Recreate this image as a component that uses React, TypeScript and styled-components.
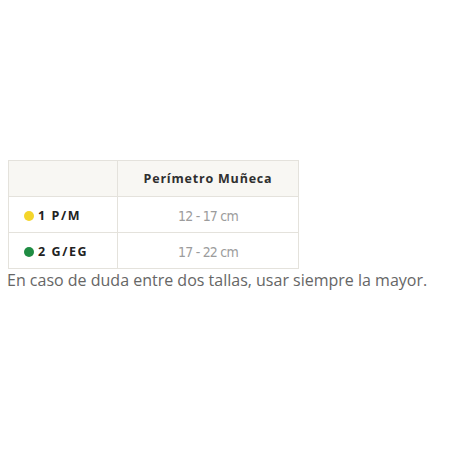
import React from 'react'
import styled, { createGlobalStyle } from 'styled-components'

const GlobalStyle = createGlobalStyle`
  body {
    margin: 0;
    background: #ffffff;
    font-family: "Open Sans", "Liberation Sans", sans-serif;
  }
`

const Page = styled.div`
  padding: 160px 8px 0 8px;
  height: 450px;
  box-sizing: border-box;
`

const SizeTable = styled.table`
  border-collapse: collapse;
  width: 291px;
  table-layout: fixed;
`

const HeadCell = styled.th`
  height: 35px;
  padding: 0;
  background: #f8f7f3;
  border: 1px solid #e4e2dc;
  font-family: "Open Sans", "Liberation Sans", sans-serif;
  font-weight: 700;
  font-size: 12.5px;
  letter-spacing: 0.8px;
  color: #2f2f2f;
  text-align: center;
`

const Cell = styled.td<{ $label?: boolean }>`
  height: 35px;
  padding: ${({ $label }) => ($label ? '0 0 0 15px' : '0')};
  border: 1px solid #e4e2dc;
  text-align: ${({ $label }) => ($label ? 'left' : 'center')};
`

const SizeLabel = styled.span`
  display: inline-flex;
  align-items: center;
  gap: 4px;
  font-family: "Open Sans", "Liberation Sans", sans-serif;
  font-weight: 700;
  font-size: 12.5px;
  letter-spacing: 1.6px;
  color: #222;
`

const Dot = styled.span<{ $color: string }>`
  width: 10px;
  height: 10px;
  border-radius: 50%;
  background: ${({ $color }) => $color};
  display: inline-block;
`

const Range = styled.span`
  font-family: "DejaVu Sans Condensed", "DejaVu Sans", sans-serif;
  font-stretch: condensed;
  font-weight: 300;
  font-size: 14px;
  color: #9c9c9c;
  letter-spacing: -0.8px;
`

const Note = styled.p`
  margin: 1px 0 0 -1px;
  font-family: "Open Sans", "Liberation Sans", sans-serif;
  font-size: 16px;
  color: #666;
  line-height: 20px;
`

const sizes = [
  { label: '1 P/M', color: '#f4d52a', range: '12 - 17 cm' },
  { label: '2 G/EG', color: '#1f8c43', range: '17 - 22 cm' },
]

export default function App() {
  return (
    <>
      <GlobalStyle />
      <Page>
        <SizeTable>
          <colgroup>
            <col style={{ width: 109 }} />
            <col />
          </colgroup>
          <thead>
            <tr>
              <HeadCell />
              <HeadCell>Perímetro Muñeca</HeadCell>
            </tr>
          </thead>
          <tbody>
            {sizes.map((s) => (
              <tr key={s.label}>
                <Cell $label>
                  <SizeLabel>
                    <Dot $color={s.color} />
                    {s.label}
                  </SizeLabel>
                </Cell>
                <Cell>
                  <Range>{s.range}</Range>
                </Cell>
              </tr>
            ))}
          </tbody>
        </SizeTable>
        <Note>En caso de duda entre dos tallas, usar siempre la mayor.</Note>
      </Page>
    </>
  )
}
